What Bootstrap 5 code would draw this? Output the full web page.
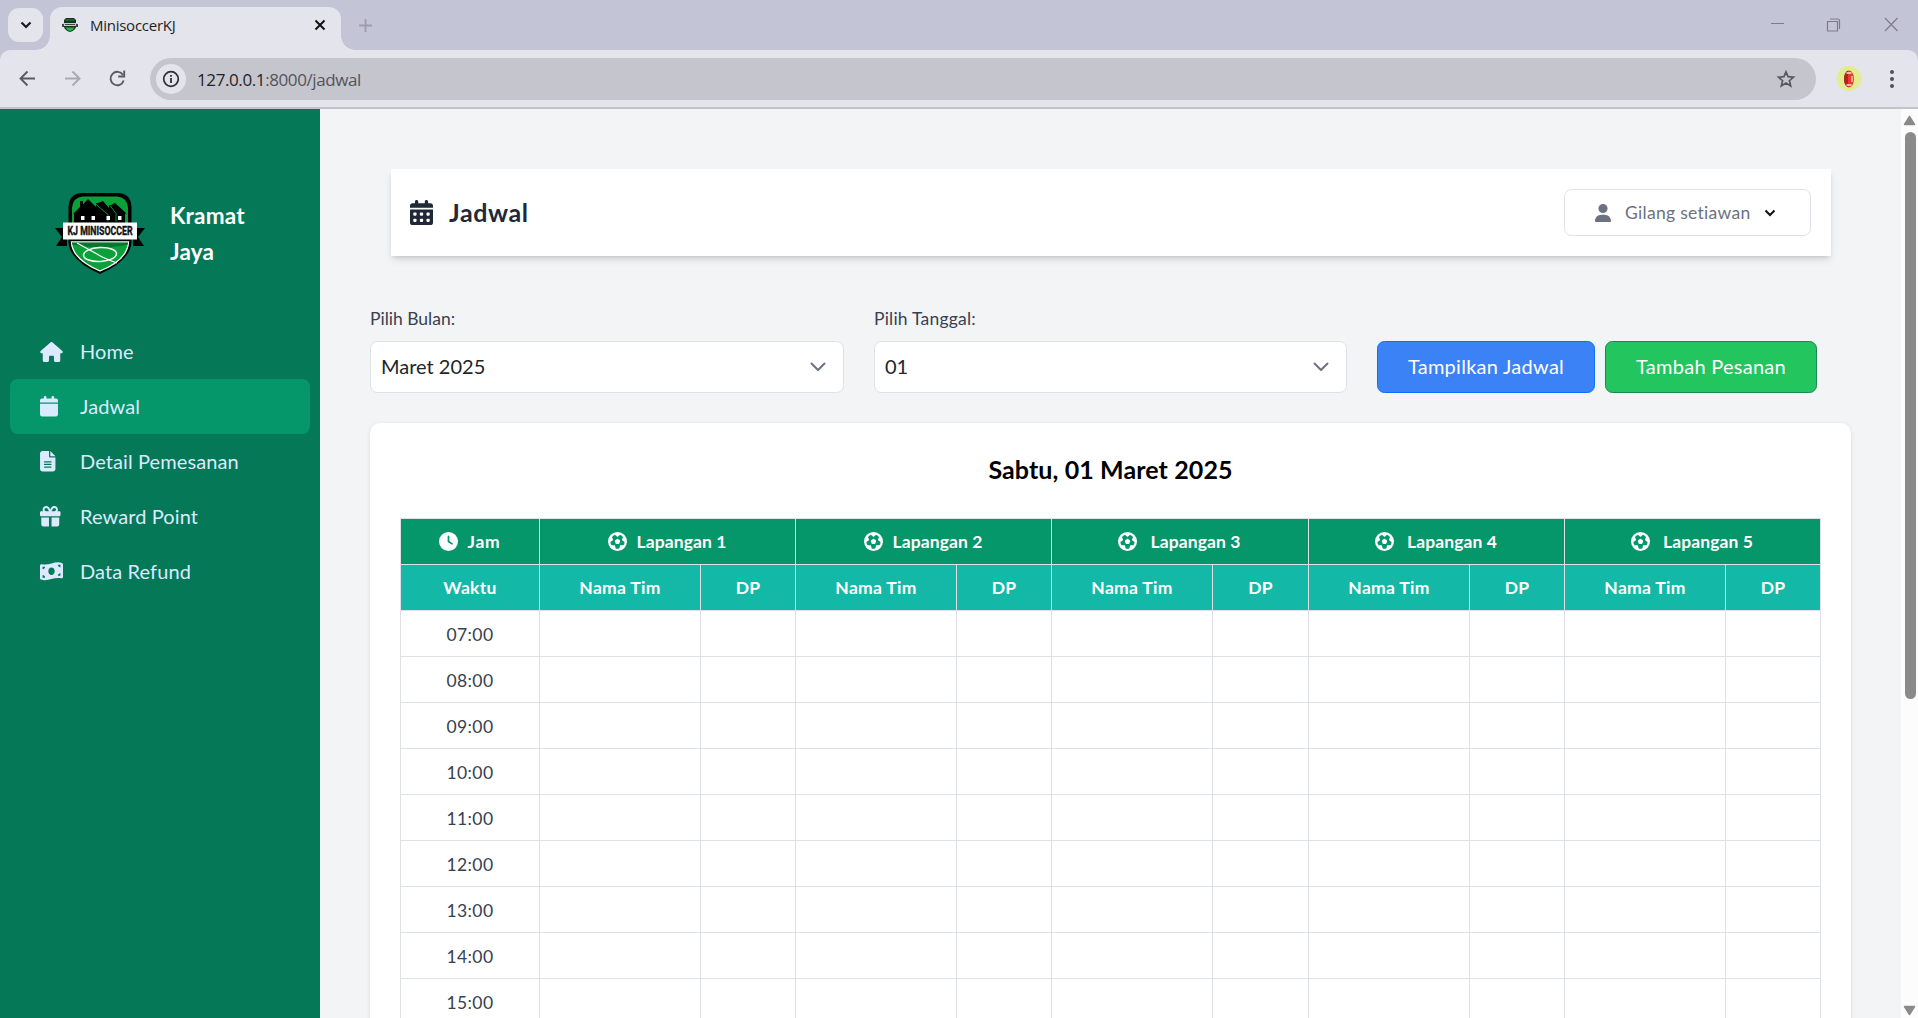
<!DOCTYPE html>
<html lang="id">
<head>
<meta charset="utf-8">
<title>MinisoccerKJ</title>
<link href="https://cdn.jsdelivr.net/npm/bootstrap@5.3.0/dist/css/bootstrap.min.css" rel="stylesheet">
<style>
  body { font-family: Lato, sans-serif; font-size: 20px; letter-spacing: .1px; height: 1018px; overflow: hidden; background: #f3f4f6; color: #212529; }
  svg { display: block; flex: none; }
  .fa { fill: currentColor; }

  /* browser frame */
  .browser { font-family: "Open Sans", sans-serif; background: #c4c4d7; }
  .tabstrip { height: 50px; padding-left: 8px; }
  .tab-search { width: 35px; height: 34px; margin-top: 8px; border-radius: 11px; background: #e4e4ec; }
  .tab-item { width: 291px; height: 43px; margin: 7px 0 0 7px; padding: 0 15px 7px 12px; border-radius: 12px 12px 0 0; background: #e4e4ec; font-size: 15px; letter-spacing: -.26px; color: #1f1f1f; position: relative; }
  .tab-item::before, .tab-item::after { content: ""; position: absolute; bottom: 0; width: 14px; height: 14px; }
  .tab-item::before { left: -14px; background: radial-gradient(circle at 0 0, transparent 13.5px, #e4e4ec 14px); }
  .tab-item::after { right: -14px; background: radial-gradient(circle at 100% 0, transparent 13.5px, #e4e4ec 14px); }
  .tab-plus { margin: 16px 0 0 15px; }
  .toolbar { height: 59px; padding: 1px 18px 0 18px; background: #e4e4ec; border-bottom: 2px solid #c2c2ca; border-radius: 10px 10px 0 0; }
  .omnibox { height: 42px; margin-left: 22px; padding: 0 20px 0 6px; border-radius: 21px; background: #c5c5ce; font-size: 17px; letter-spacing: -.4px; color: #54545a; }
  .omnibox b { font-weight: 400; color: #1f1f1f; }
  .info-dot { width: 30px; height: 30px; margin-right: 11px; border-radius: 50%; background: #e4e4ec; }
  .url-text { padding-top: 1px; }

  /* sidebar */
  .sidebar { width: 320px; background: #047857; color: #dbeafe; padding: 84px 10px 0; }
  .brand { height: 81px; margin-bottom: 50px; padding-left: 45px; gap: 25px; }
  .brand-name { font-size: 22.5px; line-height: 35.2px; font-weight: 700; color: #fff; letter-spacing: .2px; }
  .side-link { height: 55px; padding-left: 30px; border-radius: 7.5px; color: inherit; text-decoration: none; }
  .side-link.active { background: #059669; }
  .side-link span { width: 40px; }
  .side-link div { margin-top: -2px; }

  /* page */
  .page { padding: 60px 50px 0; }
  .topbar { height: 87px; margin: 0 20px 0 21px; padding: 0 20px 0 19px; background: #fff; box-shadow: 0 5px 7.5px -1px rgba(0,0,0,.1), 0 2.5px 5px -2px rgba(0,0,0,.14); color: #1f2937; }
  .topbar h1 { font-size: 25px; font-weight: 700; letter-spacing: .6px; line-height: 1; margin: 0 0 0 16px; }
  .user-btn { height: 47px; width: 247px; border: 1px solid #dee2e6; border-radius: 7.5px; background: #fff; color: #6b7280; font-size: 17.5px; letter-spacing: .3px; padding: 0 0 0 30px; }
  .user-name { margin: 1px 13px 0 14px; }
  .filters { margin-top: 50px; gap: 30px; }
  .filters label { display: block; font-size: 17.5px; line-height: 25px; margin-bottom: 10px; color: #374151; letter-spacing: 0; }
  .filters .wide-track { letter-spacing: .22px; }
  .field { height: 52px; border: 1px solid #dee2e6; border-radius: 7.5px; background: #fff; padding: 0 17px 0 10px; color: #212529; }
  .field span { margin-top: -2px; letter-spacing: 0; }
  .field-a { width: 474px; }
  .field-b { width: 473px; }
  .btn-page { height: 52px; border-radius: 7.5px; color: #fff; font-size: 20px; padding: 0 0 2px; letter-spacing: .27px; border: 1px solid; }
  .btn-show { width: 218px; background: #3b82f6; border-color: #0d6efd; margin-right: 10px; }
  .btn-add { width: 212px; background: #22c55e; border-color: #198754; }
  .board { margin-top: 30px; height: 760px; border-radius: 10px; background: #fff; box-shadow: 0 1px 4px rgba(0,0,0,.1); padding: 34px 30px 0; }
  .board h2 { font-size: 25px; line-height: 25px; font-weight: 700; color: #000; text-align: center; margin: 0 0 36px; }
  .sched { table-layout: fixed; width: 1421px; border-collapse: collapse; font-size: 17.5px; text-align: center; color: #374151; }
  .sched th, .sched td { border: 1px solid #dee2e6; height: 46px; padding: 0; vertical-align: middle; line-height: 25px; }
  .sched th { color: #fff; font-weight: 700; }
  .sched td { letter-spacing: .4px; padding-top: 1px; }
  .row-field th { background: #059669; }
  .row-sub th { background: #14b8a6; letter-spacing: .3px; }
  .th-in { gap: 9px; }
  .th-in.far { gap: 13px; padding-right: 1px; }
  .jam { letter-spacing: .8px; }

  .scroll-track { width: 17px; background: #fcfcfc; padding: 6px 0 2px; }
  .thumb { width: 11px; height: 567px; margin: 6px 0 0 1px; border-radius: 6px; background: #8a8a8a; }
</style>
<script src="https://cdn.jsdelivr.net/npm/bootstrap@5.3.0/dist/js/bootstrap.bundle.min.js"></script>
</head>
<body class="d-flex flex-column">

<svg width="0" height="0" class="position-absolute">
  <symbol id="mini-crest" viewBox="0 0 16 14">
    <path d="M4 0h8l2 2v7q-1 3.500-6 5-5-1.500-6-5V2z" fill="#16351f"/>
    <path d="M3.500 9.500h9q-1 2.500-4.500 3.700Q4.500 12 3.500 9.500z" fill="#27b04a"/>
    <path d="M3.500 1.500h9v1h-9z" fill="#1f8d3f"/>
    <path d="M1 5h14v3H1z" fill="#c9cccb"/><path d="M0 6h2v3H0zM14 6h2v3h-2zM3 6h10v1H3z" fill="#444"/>
  </symbol>
  <symbol id="futbol" viewBox="0 0 512 512"><path d="M417.300 360.100l-71.600-4.800c-5.200-.3-10.300 1.100-14.500 4.200s-7.200 7.400-8.400 12.500l-17.600 69.600C289.500 445.800 273 448 256 448s-33.500-2.200-49.200-6.400L189.200 372c-1.300-5-4.300-9.400-8.400-12.500s-9.300-4.500-14.500-4.200l-71.600 4.800c-17.600-27.200-28.500-59.200-30.400-93.600L125 228.300c4.400-2.800 7.600-7 9.200-11.900s1.400-10.200-.5-15l-26.700-66.600C128 109.200 155.300 89 186.700 76.900l55.200 46c4 3.300 9 5.100 14.100 5.100s10.200-1.800 14.100-5.100l55.200-46c31.300 12.100 58.700 32.300 79.600 57.900l-26.700 66.600c-1.900 4.800-2.100 10.100-.5 15s4.900 9.100 9.200 11.900l60.700 38.200c-1.900 34.400-12.800 66.400-30.400 93.600zM256 512A256 256 0 1 0 256 0a256 256 0 1 0 0 512zm14.100-325.700c-8.400-6.100-19.800-6.100-28.200 0L194 221c-8.400 6.100-11.900 16.900-8.700 26.800l18.300 56.300c3.200 9.900 12.400 16.600 22.800 16.600l59.200 0c10.400 0 19.600-6.700 22.800-16.600l18.300-56.300c3.200-9.900-.3-20.700-8.700-26.800l-47.900-34.800z"/></symbol>
</svg>

<header class="browser">
  <div class="tabstrip d-flex">
    <div class="tab-search d-flex align-items-center justify-content-center">
      <svg width="12" height="8" viewBox="0 0 12 8"><path d="M1.500 1.500L6 6l4.500-4.500" fill="none" stroke="#1a1a1a" stroke-width="2.200"/></svg>
    </div>
    <div class="tab-item d-flex align-items-center">
      <svg width="16" height="14"><use href="#mini-crest"/></svg>
      <span class="ms-2 ps-1 me-auto">MinisoccerKJ</span>
      <svg width="12" height="12" viewBox="0 0 12 12"><path d="M1.500 1.500l9 9M10.500 1.500l-9 9" stroke="#111" stroke-width="2"/></svg>
    </div>
    <svg class="tab-plus" width="20" height="20" viewBox="0 0 20 20"><path d="M9.500 3v13M3 9.500h13" stroke="#9c9cab" stroke-width="1.800"/></svg>
    <div class="ms-auto d-flex pt-3">
      <svg width="148" height="18" viewBox="0 0 148 18"><path d="M1 7.500h13M115 2l12.500 13M127.500 2l-12.500 13" stroke="#7c7c8d" stroke-width="1.200"/><path d="M57.500 5.500h10v9.500h-10zM60 3h7.500q2 0 2 2v8" fill="none" stroke="#7c7c8d" stroke-width="1.200"/></svg>
    </div>
  </div>
  <div class="toolbar d-flex align-items-center">
    <svg width="110" height="20" viewBox="0 0 110 20" fill="none" stroke-width="1.900">
      <path d="M17 9.500H3M9.500 2.500L2.500 9.500l7 7" stroke="#5a5a60"/>
      <path d="M47 9.500h14M54.500 2.500l7 7-7 7" stroke="#a9a9b2"/>
      <path d="M105 6A6.700 6.700 0 1 0 105.700 11.500" stroke="#5a5a60"/><path d="M106.200 1.500v6h-6" stroke="#5a5a60"/>
    </svg>
    <div class="omnibox flex-grow-1 d-flex align-items-center">
      <div class="info-dot d-flex align-items-center justify-content-center">
        <svg width="18" height="18" viewBox="0 0 18 18"><circle cx="9" cy="9" r="7.300" fill="none" stroke="#303034" stroke-width="1.700"/><path d="M9 8v5M9 5v1.800" stroke="#303034" stroke-width="1.800"/></svg>
      </div>
      <span class="url-text"><b>127.0.0.1</b>:8000/jadwal</span>
      <svg class="ms-auto" width="20" height="20" viewBox="0 0 20 20"><path d="M10 2.800l2.100 4.900 5.400.5-4.100 3.500 1.300 5.200L10 14.100l-4.700 2.800 1.300-5.200L2.500 8.200l5.400-.5z" fill="none" stroke="#57575d" stroke-width="1.700"/></svg>
    </div>
    <svg class="ms-3 me-3" width="32" height="26" viewBox="0 0 32 26"><circle cx="17" cy="12.500" r="12.400" fill="#e3ec90"/><ellipse cx="17" cy="13" rx="5" ry="8.500" fill="#e8392a"/><path d="M16 4.500q-4 2-4 8.500t4 8z" fill="#a9281a"/><path d="M14.500 7h5M14.500 19h5M20 10v6" stroke="#fbe3dc" stroke-width="1.300"/></svg>
    <svg class="ms-1" width="16" height="20" viewBox="0 0 16 20" fill="#505056"><circle cx="8" cy="3" r="2"/><circle cx="8" cy="10" r="2"/><circle cx="8" cy="17" r="2"/></svg>
  </div>
</header>

<div class="d-flex flex-grow-1 overflow-hidden">
  <nav class="sidebar flex-shrink-0">
    <div class="brand d-flex align-items-center">
      <svg width="90" height="81" viewBox="0 0 90 81">
        <path d="M0 35h12v18H1l6-9zM90 35H78v18h11l-6-9z" fill="#000"/>
        <path d="M26 0h38q12 1 12.500 14V48q0 19-31.500 33Q13.500 67 13.500 48V14Q14 1 26 0z" fill="#000"/>
        <path d="M28 3.500h34q10 1 11 11V32H17V14.500q1-10 11-11z" fill="#0aa13a"/>
        <path d="M18.500 20.500L25 14V8h3v3.500l5-5.500 8 8v-4h2l5-2 6 7v-3h2l4-2 11 10-1 1.500V30H19v-9z" fill="#000"/>
        <path d="M41 11.500l12 10v7M55 12.500l6 8v8" stroke="#0aa13a" stroke-width=".9" fill="none"/>
        <path d="M26 23h3.500v4H26zM36.500 23H40v4h-3.500zM51.500 23H55v4h-3.500zM63 23h3.500v4H63z" fill="#fff"/>
        <path d="M16.500 49h57q-1 18-28.500 29Q17 66 16.500 49z" fill="#0aa13a" stroke="#fff" stroke-width="1.300"/>
        <path d="M17 49.500h56v2q-24 6-56 0z" fill="#08752c"/>
        <ellipse cx="45" cy="61.500" rx="16.500" ry="7" fill="none" stroke="#fff" stroke-width="1.500" transform="rotate(-3 45 61.500)"/>
        <path d="M22 50l20 11q6 4 20 9" stroke="#fff" stroke-width="1.200" fill="none"/>
        <path d="M8 29.500h74v17H8z" fill="#fff"/>
        <text x="45" y="42.300" text-anchor="middle" font-family="Roboto, sans-serif" font-weight="700" font-size="12.300" textLength="65" lengthAdjust="spacingAndGlyphs" letter-spacing="0" fill="#111" stroke="#111" stroke-width=".4">KJ MINISOCCER</text>
      </svg>
      <div class="brand-name">Kramat<br>Jaya</div>
    </div>
    <a class="side-link d-flex align-items-center" href="#"><span><svg class="fa" width="23" height="20" viewBox="0 0 576 512"><path d="M575.800 255.500c0 18-15 32.100-32 32.100l-32 0 .7 160.200c0 2.700-.2 5.400-.5 8.100l0 16.200c0 22.100-17.900 40-40 40l-16 0c-1.100 0-2.200 0-3.300-.1c-1.400 .1-2.800 .1-4.200 .1L416 512l-24 0c-22.100 0-40-17.900-40-40l0-24 0-64c0-17.700-14.300-32-32-32l-64 0c-17.700 0-32 14.300-32 32l0 64 0 24c0 22.100-17.900 40-40 40l-24 0-31.900 0c-1.500 0-3-.1-4.500-.2c-1.200 .1-2.400 .2-3.600 .2l-16 0c-22.100 0-40-17.900-40-40l0-112c0-.9 0-1.900 .1-2.800l0-69.700-32 0c-18 0-32-14-32-32.100c0-9 3-17 10-24L266.400 8c7-7 15-8 22-8s15 2 21 7L564.800 231.500c8 7 12 15 11 24z"/></svg></span><div>Home</div></a>
    <a class="side-link active d-flex align-items-center" href="#"><span><svg class="fa" width="18" height="20.500" viewBox="0 0 448 512"><path d="M96 32l0 32L48 64C21.500 64 0 85.500 0 112l0 48 448 0 0-48c0-26.500-21.500-48-48-48l-48 0 0-32c0-17.700-14.300-32-32-32s-32 14.300-32 32l0 32L160 64l0-32c0-17.700-14.300-32-32-32S96 14.300 96 32zM448 192L0 192 0 464c0 26.500 21.500 48 48 48l352 0c26.500 0 48-21.500 48-48l0-272z"/></svg></span><div>Jadwal</div></a>
    <a class="side-link d-flex align-items-center" href="#"><span><svg class="fa" width="15.500" height="20.500" viewBox="0 0 384 512"><path fill-rule="evenodd" d="M64 0C28.700 0 0 28.700 0 64L0 448c0 35.300 28.700 64 64 64l256 0c35.300 0 64-28.700 64-64l0-288-128 0c-17.700 0-32-14.300-32-32L224 0 64 0zM256 0l0 128 128 0L256 0zM112 256l160 0c8.800 0 16 7.200 16 16s-7.200 16-16 16l-160 0c-8.800 0-16-7.200-16-16s7.200-16 16-16zm0 64l160 0c8.800 0 16 7.200 16 16s-7.200 16-16 16l-160 0c-8.800 0-16-7.200-16-16s7.200-16 16-16zm0 64l160 0c8.800 0 16 7.200 16 16s-7.200 16-16 16l-160 0c-8.800 0-16-7.200-16-16s7.200-16 16-16z"/></svg></span><div>Detail Pemesanan</div></a>
    <a class="side-link d-flex align-items-center" href="#"><span><svg class="fa" width="20.500" height="20.500" viewBox="0 0 512 512"><path d="M190.500 68.800L225.300 128l-1.300 0-72 0c-22.100 0-40-17.900-40-40s17.900-40 40-40l2.200 0c14.900 0 28.800 7.900 36.300 20.800zM64 88c0 14.400 3.500 28 9.600 40L32 128c-17.700 0-32 14.300-32 32l0 64c0 17.700 14.300 32 32 32l448 0c17.700 0 32-14.300 32-32l0-64c0-17.700-14.300-32-32-32l-41.600 0c6.100-12 9.600-25.600 9.600-40c0-48.600-39.400-88-88-88l-2.200 0c-31.900 0-61.500 16.900-77.700 44.400L256 85.500l-24.100-41C215.700 16.900 186.100 0 154.200 0L152 0C103.400 0 64 39.400 64 88zm336 0c0 22.100-17.900 40-40 40l-72 0-1.300 0 34.800-59.200C329.100 55.900 342.900 48 357.800 48l2.200 0c22.100 0 40 17.900 40 40zM32 288l0 176c0 26.500 21.500 48 48 48l144 0 0-224L32 288zM288 512l144 0c26.500 0 48-21.500 48-48l0-176-192 0 0 224z"/></svg></span><div>Reward Point</div></a>
    <a class="side-link d-flex align-items-center" href="#"><span><svg class="fa" width="23" height="20.500" viewBox="0 0 576 512"><path d="M0 112.500V422.300c0 18 10.100 35 27 41.300c87 32.500 174 10.300 261-11.900c79.800-20.300 159.600-40.700 239.300-18.900c23 6.300 48.700-9.500 48.700-33.400V89.700c0-18-10.100-35-27-41.300C462 15.900 375 38.100 288 60.300C208.200 80.600 128.400 100.900 48.700 79.100C25.600 72.800 0 88.600 0 112.500zM288 352c-44.200 0-80-43-80-96s35.800-96 80-96s80 43 80 96s-35.800 96-80 96zM64 352c35.300 0 64 28.700 64 64H64V352zm64-208c0 35.300-28.700 64-64 64V144h64zM512 304v64H448c0-35.300 28.700-64 64-64zM448 96h64v64c-35.300 0-64-28.700-64-64z"/></svg></span><div>Data Refund</div></a>
  </nav>

  <main class="page flex-grow-1">
    <div class="topbar d-flex align-items-center">
      <svg class="fa" width="23" height="25" viewBox="0 0 448 512" preserveAspectRatio="none"><path fill-rule="evenodd" d="M96 32l0 32L48 64C21.500 64 0 85.500 0 112l0 48 448 0 0-48c0-26.500-21.500-48-48-48l-48 0 0-32c0-17.700-14.300-32-32-32s-32 14.300-32 32l0 32L160 64l0-32c0-17.700-14.300-32-32-32S96 14.300 96 32zM448 192L0 192 0 464c0 26.500 21.500 48 48 48l352 0c26.500 0 48-21.500 48-48l0-272zM80 256h32q16 0 16 16v32q0 16-16 16h-32q-16 0-16-16v-32q0-16 16-16zm128 0h32q16 0 16 16v32q0 16-16 16h-32q-16 0-16-16v-32q0-16 16-16zm128 0h32q16 0 16 16v32q0 16-16 16h-32q-16 0-16-16v-32q0-16 16-16zM80 384h32q16 0 16 16v32q0 16-16 16h-32q-16 0-16-16v-32q0-16 16-16zm128 0h32q16 0 16 16v32q0 16-16 16h-32q-16 0-16-16v-32q0-16 16-16zm128 0h32q16 0 16 16v32q0 16-16 16h-32q-16 0-16-16v-32q0-16 16-16z"/></svg>
      <h1 class="me-auto">Jadwal</h1>
      <button class="user-btn d-flex align-items-center" type="button">
        <svg class="fa" width="16" height="18" viewBox="0 0 448 512" preserveAspectRatio="none"><path d="M224 256A128 128 0 1 0 224 0a128 128 0 1 0 0 256zm-45.700 48C79.800 304 0 383.800 0 482.300C0 498.700 13.300 512 29.700 512l388.600 0c16.400 0 29.700-13.300 29.700-29.700C448 383.800 368.200 304 269.700 304l-91.400 0z"/></svg>
        <span class="user-name">Gilang setiawan</span>
        <svg width="12" height="8" viewBox="0 0 12 8"><path d="M1.500 1.500L6 6l4.500-4.500" fill="none" stroke="#111" stroke-width="2"/></svg>
      </button>
    </div>

    <div class="filters d-flex align-items-end">
      <div><label>Pilih Bulan:</label>
        <div class="field field-a d-flex align-items-center justify-content-between"><span>Maret 2025</span><svg width="16" height="10" viewBox="0 0 16 10"><path d="M1.500 1.500L8 8l6.500-6.500" fill="none" stroke="#6b7280" stroke-width="2" stroke-linecap="round" stroke-linejoin="round"/></svg></div></div>
      <div><label class="wide-track">Pilih Tanggal:</label>
        <div class="field field-b d-flex align-items-center justify-content-between"><span>01</span><svg width="16" height="10" viewBox="0 0 16 10"><path d="M1.500 1.500L8 8l6.500-6.500" fill="none" stroke="#6b7280" stroke-width="2" stroke-linecap="round" stroke-linejoin="round"/></svg></div></div>
      <div class="d-flex">
        <button class="btn btn-page btn-show" type="button">Tampilkan Jadwal</button>
        <button class="btn btn-page btn-add" type="button">Tambah Pesanan</button>
      </div>
    </div>

    <section class="board">
      <h2>Sabtu, 01 Maret 2025</h2>
      <table class="sched">
        <colgroup><col style="width:139px"><col style="width:161px"><col style="width:95px"><col style="width:161px"><col style="width:95px"><col style="width:161px"><col style="width:96px"><col style="width:161px"><col style="width:95px"><col style="width:161px"><col style="width:95px"></colgroup>
        <thead>
          <tr class="row-field" id="fields"><th><div class="th-in d-flex align-items-center justify-content-center"><svg class="fa" width="19" height="19" viewBox="0 0 512 512"><path fill-rule="evenodd" d="M256 0a256 256 0 1 1 0 512A256 256 0 1 1 256 0zM232 120l0 136c0 8 4 15.500 10.700 20l96 64c11 7.400 25.900 4.400 33.300-6.700s4.400-25.900-6.700-33.300L280 243.200 280 120c0-13.300-10.700-24-24-24s-24 10.700-24 24z"/></svg><span class="jam">Jam</span></div></th></tr>
          <tr class="row-sub" id="subs"><th>Waktu</th></tr>
        </thead>
        <tbody id="hours"></tbody>
      </table>
    </section>
  </main>

  <div class="scroll-track d-flex flex-column align-items-center">
    <svg width="13" height="11" viewBox="0 0 13 11"><path d="M6.500 1.500L11.500 9.500h-10z" fill="#8a8a8a" stroke="#8a8a8a" stroke-width="1.500" stroke-linejoin="round"/></svg>
    <div class="thumb"></div>
    <svg class="mt-auto" width="13" height="11" viewBox="0 0 13 11"><path d="M6.500 9.500L11.500 1.500h-10z" fill="#8a8a8a" stroke="#8a8a8a" stroke-width="1.500" stroke-linejoin="round"/></svg>
  </div>
</div>

<script>
  // Five fields, each with a team and a down-payment column
  const fields = document.getElementById('fields'), subs = document.getElementById('subs'), hours = document.getElementById('hours');
  for (let n = 1; n <= 5; n++) {
    fields.insertAdjacentHTML('beforeend', `<th colspan="2"><div class="th-in${n > 2 ? ' far' : ''} d-flex align-items-center justify-content-center"><svg class="fa" width="19" height="19"><use href="#futbol"/></svg><span>Lapangan ${n}</span></div></th>`);
    subs.insertAdjacentHTML('beforeend', '<th>Nama Tim</th><th>DP</th>');
  }
  for (let h = 7; h <= 15; h++) {
    hours.insertAdjacentHTML('beforeend', `<tr><td>${String(h).padStart(2, '0')}:00</td>${'<td></td>'.repeat(10)}</tr>`);
  }
</script>
</body>
</html>
